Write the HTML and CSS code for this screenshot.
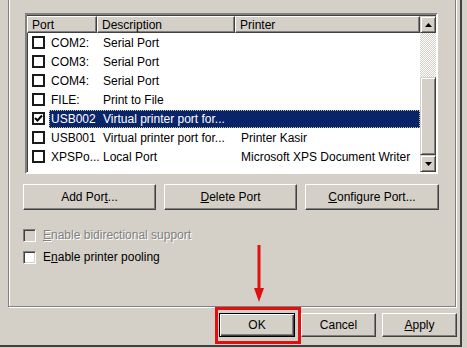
FILE: index.html
```html
<!DOCTYPE html>
<html>
<head>
    <title>Printer Properties - Ports</title>
    <link rel="stylesheet" href="styles.css">
</head>
<body>
<div class="dialog">
    <div class="group">
        <div class="ports">
            <div class="list">
                <div class="head">
                    <div class="hcol">Port</div>
                    <div class="hcol">Description</div>
                    <div class="hcol">Printer</div>
                </div>
                <div class="row"><span class="box"></span><div class="text"><span>COM2:</span><span>Serial Port</span><span></span></div></div>
                <div class="row"><span class="box"></span><div class="text"><span>COM3:</span><span>Serial Port</span><span></span></div></div>
                <div class="row"><span class="box"></span><div class="text"><span>COM4:</span><span>Serial Port</span><span></span></div></div>
                <div class="row"><span class="box"></span><div class="text"><span>FILE:</span><span>Print to File</span><span></span></div></div>
                <div class="row sel">
                    <span class="box"><svg width="9" height="9" viewBox="0 0 9 9"><path d="M1 4 L3.5 6.5 L8 1.5" fill="none" stroke="#000" stroke-width="2"/></svg></span>
                    <div class="text"><span>USB002</span><span>Virtual printer port for...</span><span></span></div>
                </div>
                <div class="row"><span class="box"></span><div class="text"><span>USB001</span><span>Virtual printer port for...</span><span>Printer Kasir</span></div></div>
                <div class="row"><span class="box"></span><div class="text"><span>XPSPo...</span><span>Local Port</span><span>Microsoft XPS Document Writer</span></div></div>
            </div>
            <div class="scroll">
                <div class="sbtn"><svg width="7" height="4" viewBox="0 0 7 4"><path d="M3.5 0 L7 4 L0 4 Z" fill="#000"/></svg></div>
                <div class="track"></div>
                <div class="thumb"></div>
                <div class="sbtn"><svg width="7" height="4" viewBox="0 0 7 4"><path d="M0 0 L7 0 L3.5 4 Z" fill="#000"/></svg></div>
            </div>
        </div>

        <div class="actions">
            <div class="btn">Add Por<u>t</u>...</div>
            <div class="btn"><u>D</u>elete Port</div>
            <div class="btn"><u>C</u>onfigure Port...</div>
        </div>

        <div class="opt disabled"><span class="cbox"></span><span><u>E</u>nable bidirectional support</span></div>
        <div class="opt"><span class="cbox"></span><span>E<u>n</u>able printer pooling</span></div>
    </div>

    <div class="footer">
        <div class="btn default">OK</div>
        <div class="btn">Cancel</div>
        <div class="btn"><u>A</u>pply</div>
    </div>

    <div class="mark"></div>
    <svg class="arrow" width="12" height="58" viewBox="0 0 12 58">
        <rect x="4.5" y="0" width="3" height="46" fill="#e01010"/>
        <path d="M1 43 L11 43 L6 57 Z" fill="#e01010"/>
    </svg>
</div>
</body>
</html>
```

FILE: styles.css
```css
body { margin: 0; background: #d4d0c8; font-family: 'Liberation Sans', Arial, sans-serif; font-size: 12px; color: #000; }
u { text-decoration: underline; text-underline-offset: 1px; }

.dialog { position: relative; width: 460px; height: 345px; border-right: 2px solid #404040; border-bottom: 2px solid #404040; overflow: hidden; }

.group { box-sizing: border-box; margin: -20px 0 0 8px; width: 448px; height: 327px; padding: 32px 0 0 16px;
         border: 1px solid #808080; box-shadow: inset 1px 1px 0 #fff, 1px 1px 0 #fff; }

/* list view */
.ports { display: flex; width: 409px; height: 157px; border: 2px solid; border-color: #808080 #fff #fff #808080;
         box-shadow: inset 1px 1px 0 #404040; background: #fff; }
.list { flex: 1; padding: 1px 0 0 0; }
.head { display: grid; grid-template-columns: 70px 138px 1fr; height: 17px; }
.hcol { box-sizing: border-box; padding: 1px 0 0 4px; line-height: 14px; background: #d4d0c8;
        border: 1px solid; border-color: #fff #404040 #404040 #fff; box-shadow: inset -1px -1px 0 #808080; }
.row { display: grid; grid-template-columns: 22px 1fr; height: 19px; align-items: center; }
.box { box-sizing: border-box; width: 13px; height: 13px; margin-left: 5px; border: 2px solid #1a1a1a; background: #fff;
       display: flex; align-items: center; justify-content: center; }
.text { display: grid; grid-template-columns: 48px 138px 1fr; height: 18px; align-items: center; white-space: nowrap; }
.text span { padding-left: 2px; }
.text span + span { padding-left: 6px; }
.row.sel .text { background: #0a246a; color: #fff; outline: 1px dotted #c9c39a; outline-offset: -1px; }

.scroll { display: flex; flex-direction: column; width: 16px; padding-top: 1px; }
.sbtn, .thumb { box-sizing: border-box; background: #d4d0c8; border: 1px solid; border-color: #d4d0c8 #404040 #404040 #d4d0c8;
                box-shadow: inset 1px 1px 0 #fff, inset -1px -1px 0 #808080; }
.sbtn { height: 17px; display: flex; align-items: center; justify-content: center; }
.track { height: 44px; background: repeating-conic-gradient(#fff 0 25%, #d4d0c8 0 50%) 0 0 / 2px 2px; }
.thumb { flex: 1; }

/* buttons */
.btn { box-sizing: border-box; height: 26px; display: flex; align-items: center; justify-content: center; background: #d4d0c8;
       border: 1px solid; border-color: #fff #404040 #404040 #fff; box-shadow: inset -1px -1px 0 #808080; }
.btn.default { border-color: #000; box-shadow: inset 1px 1px 0 #fff, inset -1px -1px 0 #404040, inset -2px -2px 0 #808080; }
.actions { display: flex; gap: 8px; margin: 10px 0 0 -2px; }
.actions .btn { width: 133px; }
.actions .btn:last-child { width: 134px; }

/* check options */
.opt { display: flex; align-items: center; gap: 7px; height: 22px; margin-left: -2px; }
.actions + .opt { margin-top: 14px; }
.cbox { box-sizing: border-box; width: 13px; height: 13px; background: #fff; border: 1px solid; border-color: #808080 #fff #fff #808080;
        box-shadow: inset 1px 1px 0 #404040, inset -1px -1px 0 #d4d0c8; }
.opt.disabled { color: #808080; text-shadow: 1px 1px 0 #fff; }
.opt.disabled .cbox { background: #d4d0c8; }

.footer { display: flex; justify-content: flex-end; gap: 6px; margin: 6px 3px 0 0; }
.footer .btn { width: 75px; height: 24px; }
.footer .default { width: 76px; }

/* annotation */
.mark { position: absolute; left: 215px; top: 307px; width: 80px; height: 31px; border: 3px solid #e01010; }
.arrow { position: absolute; left: 253px; top: 245px; }
```
